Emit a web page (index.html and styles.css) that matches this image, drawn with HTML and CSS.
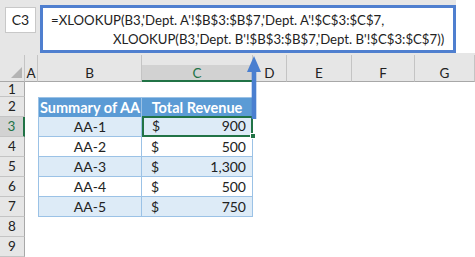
FILE: index.html
```html
<!DOCTYPE html>
<html lang="en">

<head>
    <meta charset="UTF-8">
    <title>XLOOKUP</title>
    <link rel="stylesheet" href="styles.css">
</head>

<body>
    <div class="topbar">
        <div class="namebox">C3</div>
        <div class="formula">
            <span class="line">=XLOOKUP(B3,'Dept. A'!$B$3:$B$7,'Dept. A'!$C$3:$C$7,</span>
            <span class="line second">XLOOKUP(B3,'Dept. B'!$B$3:$B$7,'Dept. B'!$C$3:$C$7))</span>
        </div>
        <div class="barfill"></div>
    </div>

    <div class="sheet">
        <!-- 列标题 -->
        <div class="colhead corner"><span class="tri"></span></div>
        <div class="colhead">A</div>
        <div class="colhead">B</div>
        <div class="colhead sel">C</div>
        <div class="colhead">D</div>
        <div class="colhead">E</div>
        <div class="colhead">F</div>
        <div class="colhead">G</div>

        <!-- 第1行 -->
        <div class="rowhead short">1</div>
        <div class="blank span7"></div>

        <!-- 第2行 表头 -->
        <div class="rowhead">2</div>
        <div class="blank"></div>
        <div class="th first">Summary of AA</div>
        <div class="th">Total Revenue</div>
        <div class="blank span4"></div>

        <div class="rowhead sel">3</div>
        <div class="blank"></div>
        <div class="td name odd">AA-1</div>
        <div class="td money odd active"><span>$</span><span>900</span><i class="handle"></i></div>
        <div class="blank span4"></div>

        <div class="rowhead">4</div>
        <div class="blank"></div>
        <div class="td name">AA-2</div>
        <div class="td money"><span>$</span><span>500</span></div>
        <div class="blank span4"></div>

        <div class="rowhead">5</div>
        <div class="blank"></div>
        <div class="td name odd">AA-3</div>
        <div class="td money odd"><span>$</span><span>1,300</span></div>
        <div class="blank span4"></div>

        <div class="rowhead">6</div>
        <div class="blank"></div>
        <div class="td name">AA-4</div>
        <div class="td money"><span>$</span><span>500</span></div>
        <div class="blank span4"></div>

        <div class="rowhead">7</div>
        <div class="blank"></div>
        <div class="td name odd last">AA-5</div>
        <div class="td money odd last"><span>$</span><span>750</span></div>
        <div class="blank span4"></div>

        <div class="rowhead">8</div>
        <div class="blank span7"></div>
        <div class="rowhead">9</div>
        <div class="blank span7"></div>
    </div>

    <!-- 蓝色箭头 -->
    <svg class="arrow" width="16" height="64" viewBox="0 0 16 64">
        <path d="M8 0 L15 16 L10.3 16 L10.3 63 L5.7 63 L5.7 16 L1 16 Z" fill="#4a7fd0"></path>
    </svg>
</body>

</html>
```

FILE: styles.css
```css
* {
    margin: 0;
    padding: 0;
    box-sizing: border-box;
}

body {
    width: 475px;
    height: 257px;
    overflow: hidden;
    background: #fff;
    font-family: Lato, "Liberation Sans", sans-serif;
    color: #222;
    position: relative;
}

/* 编辑栏 */
.topbar {
    display: flex;
    height: 55px;
    background: #e6e6e6;
}

.namebox {
    width: 31px;
    height: 26px;
    margin: 7px 0 0 5px;
    background: #fff;
    border: 1px solid #c8c8c8;
    font-size: 14px;
    text-align: center;
    line-height: 24px;
}

.formula {
    width: 416px;
    height: 48px;
    margin: 5px 0 0 4px;
    padding: 3px 0 0 8px;
    background: #fff;
    border: 3px solid #4f7fcf;
    font-size: 13.2px;
    line-height: 19px;
    white-space: nowrap;
}

.formula .line {
    display: block;
}

.formula .second {
    padding-left: 62px;
}

.barfill {
    flex: 1;
    height: 53px;
    background: #fff;
}

/* 表格 */
.sheet {
    display: grid;
    grid-template-columns: 25px 13px 104px 111px 34px 65px 63px 1fr;
    grid-template-rows: 27px 15px repeat(8, 20px);
    font-size: 14px;
}

.colhead {
    background: #e6e6e6;
    border-right: 1px solid #c4c4c4;
    border-bottom: 1px solid #a8a8a8;
    text-align: center;
    padding-top: 10px;
    line-height: 16px;
    font-size: 13.5px;
}

.colhead.sel {
    background: linear-gradient(to bottom, #e6e6e6 10px, #d2d2d2 10px);
    border-bottom: 2px solid #217346;
    color: #217346;
}

.corner {
    position: relative;
    border-right: 1px solid #c4c4c4;
}

.tri {
    position: absolute;
    right: 2px;
    bottom: 3px;
    width: 0;
    height: 0;
    border-left: 11px solid transparent;
    border-bottom: 11px solid #b4b4b4;
}

.rowhead {
    background: #e6e6e6;
    border-right: 1px solid #a8a8a8;
    border-bottom: 1px solid #c4c4c4;
    text-align: center;
    line-height: 19px;
    font-size: 13.5px;
}

.rowhead.short {
    line-height: 14px;
}

.rowhead.sel {
    background: #d2d2d2;
    border-right: 2px solid #217346;
    color: #217346;
}

.span7 {
    grid-column: span 7;
}

.span4 {
    grid-column: span 4;
}

.th {
    background: #5b9bd5;
    color: #fff;
    font-weight: bold;
    font-size: 14.5px;
    text-align: center;
    line-height: 19px;
    border-top: 1px solid #9bc2e6;
    border-right: 1px solid #9bc2e6;
}

.th.first {
    border-left: 1px solid #9bc2e6;
}

.td {
    background: #fff;
    border-bottom: 1px solid #9bc2e6;
    border-right: 1px solid #9bc2e6;
    line-height: 19px;
}

.td.odd {
    background: #ddebf7;
}

.td.name {
    border-left: 1px solid #9bc2e6;
    text-align: center;
}

.td.money {
    display: flex;
    justify-content: space-between;
    padding: 0 6px 0 9px;
}

.td.active {
    position: relative;
    border: 2px solid #217346;
    line-height: 16px;
    padding: 0 5px 0 8px;
    margin-top: -1px;
    height: 21px;
}

.handle {
    position: absolute;
    right: -5px;
    bottom: -4px;
    width: 6px;
    height: 6px;
    background: #217346;
    border: 1px solid #fff;
}

.arrow {
    position: absolute;
    left: 246px;
    top: 56px;
}
```
